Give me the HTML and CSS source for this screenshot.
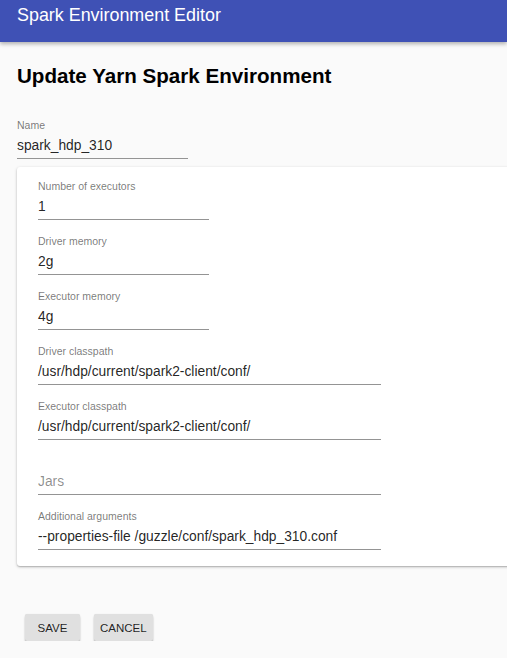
FILE: index.html
```html
<!DOCTYPE html>
<html>
<head>
<meta charset="utf-8">
<link rel="stylesheet" href="styles.css">
</head>
<body>
<header class="toolbar"><span class="toolbar-title">Spark Environment Editor</span></header>
<main class="content">
  <h2 class="page-title">Update Yarn Spark Environment</h2>
  <div class="field name-field">
    <label class="field-label">Name</label>
    <div class="field-value">spark_hdp_310</div>
  </div>
  <section class="card">
    <div class="field">
      <label class="field-label">Number of executors</label>
      <div class="field-value">1</div>
    </div>
    <div class="field">
      <label class="field-label">Driver memory</label>
      <div class="field-value">2g</div>
    </div>
    <div class="field">
      <label class="field-label">Executor memory</label>
      <div class="field-value">4g</div>
    </div>
    <div class="field wide">
      <label class="field-label">Driver classpath</label>
      <div class="field-value">/usr/hdp/current/spark2-client/conf/</div>
    </div>
    <div class="field wide">
      <label class="field-label">Executor classpath</label>
      <div class="field-value">/usr/hdp/current/spark2-client/conf/</div>
    </div>
    <div class="field wide">
      <label class="field-label empty">&nbsp;</label>
      <div class="field-value placeholder">Jars</div>
    </div>
    <div class="field wide">
      <label class="field-label">Additional arguments</label>
      <div class="field-value">--properties-file /guzzle/conf/spark_hdp_310.conf</div>
    </div>
  </section>
  <div class="actions">
    <button class="btn">SAVE</button>
    <button class="btn">CANCEL</button>
  </div>
</main>
</body>
</html>
```
FILE: styles.css
```css
html, body {
  margin: 0;
  padding: 0;
  background: #fafafa;
  overflow: hidden;
  font-family: "Liberation Sans", Arial, sans-serif;
  color: rgba(0,0,0,0.87);
}
.toolbar {
  height: 42px;
  background: #3f51b5;
  color: #fff;
  box-shadow: 0 2px 4px rgba(0,0,0,0.3);
  padding: 4px 17px 0;
  box-sizing: border-box;
  position: relative;
}
.toolbar-title {
  font-size: 17.9px;
  line-height: 22px;
}
.content {
  padding: 0 0 0 17px;
}
.page-title {
  margin: 0;
  padding-top: 22px;
  font-size: 20.6px;
  line-height: 24px;
  font-weight: bold;
  color: #000;
}
.field {
  display: flex;
  flex-direction: column;
  width: 171px;
  border-bottom: 1px solid #949494;
  padding-bottom: 4px;
}
.field-label {
  font-size: 10.5px;
  line-height: 12px;
  color: rgba(0,0,0,0.54);
  height: 12px;
}
.field-value {
  margin-top: 6px;
  font-size: 13.8px;
  line-height: 17px;
}
.placeholder {
  color: rgba(0,0,0,0.45);
}
.name-field {
  margin-top: 31px;
}
.card {
  margin-top: 8px;
  width: 540px;
  background: #fff;
  border-radius: 3px;
  box-shadow: 0 1px 3px rgba(0,0,0,0.25), 0 1px 1px rgba(0,0,0,0.12);
  padding: 13px 21px 16px;
  box-sizing: border-box;
  display: flex;
  flex-direction: column;
  gap: 15px;
}
.field.wide {
  width: 343px;
}
.actions {
  display: flex;
  gap: 14px;
  margin-top: 48px;
  padding-left: 8px;
}
.btn {
  font-family: "Liberation Sans", Arial, sans-serif;
  font-size: 11.5px;
  height: 27px;
  padding: 0 6px;
  min-width: 55px;
  border: none;
  border-radius: 2px;
  background: #e0e0e0;
  color: rgba(0,0,0,0.87);
  box-shadow: 0 2px 2px rgba(0,0,0,0.24), 0 0 1px rgba(0,0,0,0.12);
}
```
